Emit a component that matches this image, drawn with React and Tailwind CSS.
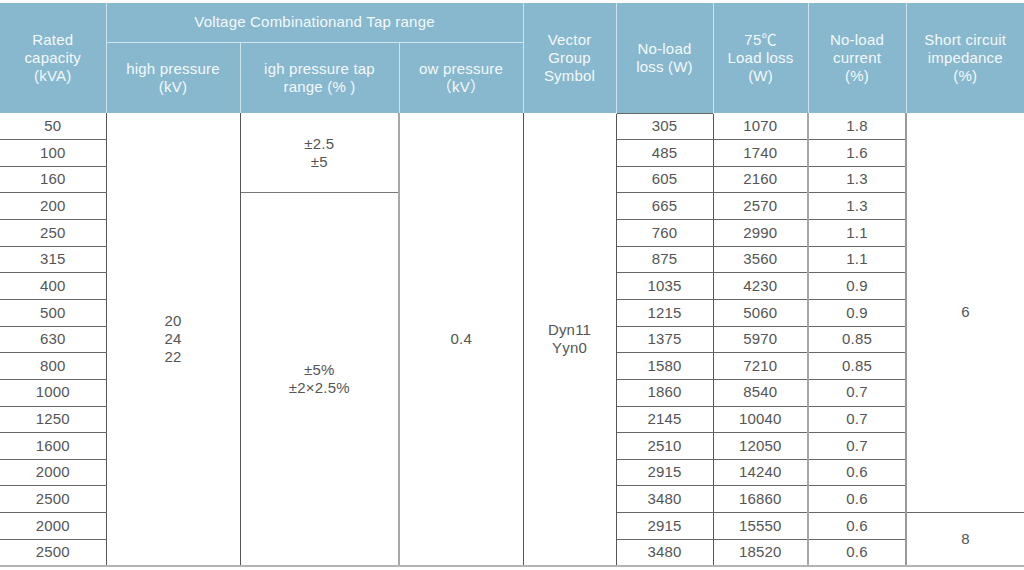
const rows = [
  { cap: '50', nl: '305', ll: '1070', cur: '1.8' },
  { cap: '100', nl: '485', ll: '1740', cur: '1.6' },
  { cap: '160', nl: '605', ll: '2160', cur: '1.3' },
  { cap: '200', nl: '665', ll: '2570', cur: '1.3' },
  { cap: '250', nl: '760', ll: '2990', cur: '1.1' },
  { cap: '315', nl: '875', ll: '3560', cur: '1.1' },
  { cap: '400', nl: '1035', ll: '4230', cur: '0.9' },
  { cap: '500', nl: '1215', ll: '5060', cur: '0.9' },
  { cap: '630', nl: '1375', ll: '5970', cur: '0.85' },
  { cap: '800', nl: '1580', ll: '7210', cur: '0.85' },
  { cap: '1000', nl: '1860', ll: '8540', cur: '0.7' },
  { cap: '1250', nl: '2145', ll: '10040', cur: '0.7' },
  { cap: '1600', nl: '2510', ll: '12050', cur: '0.7' },
  { cap: '2000', nl: '2915', ll: '14240', cur: '0.6' },
  { cap: '2500', nl: '3480', ll: '16860', cur: '0.6' },
  { cap: '2000', nl: '2915', ll: '15550', cur: '0.6' },
  { cap: '2500', nl: '3480', ll: '18520', cur: '0.6' },
];

const th = 'bg-[#87b8ce] text-[#f4f9fb] font-normal text-[15px] leading-[18px] text-center align-middle';
const td = 'h-[26.65px] p-0 text-center align-middle';

export default function App() {
  return (
    <div className="w-[1024px] h-[570px] bg-white pt-[3px] overflow-hidden font-['Liberation_Sans','Noto_Sans_CJK_SC',Arial,sans-serif]">
      <table className="w-[1024px] table-fixed border-collapse text-[15px] text-[#555] tracking-[0.2px]">
        <colgroup>
          <col className="w-[106px]" />
          <col className="w-[134px]" />
          <col className="w-[159px]" />
          <col className="w-[124px]" />
          <col className="w-[93px]" />
          <col className="w-[97px]" />
          <col className="w-[95px]" />
          <col className="w-[98px]" />
          <col className="w-[118px]" />
        </colgroup>
        <thead>
          <tr className="h-[39px]">
            <th rowSpan={2} className={`${th} border-r border-[#cfe3ec]`}>
              Rated<br />capacity<br />(kVA)
            </th>
            <th colSpan={3} className={`${th} border-r border-b border-[#cfe3ec]`}>
              Voltage Combinationand Tap range
            </th>
            <th rowSpan={2} className={`${th} border-r border-[#cfe3ec]`}>
              Vector<br />Group<br />Symbol
            </th>
            <th rowSpan={2} className={`${th} border-r border-[#cfe3ec]`}>
              No-load<br />loss (W)
            </th>
            <th rowSpan={2} className={`${th} border-r border-[#cfe3ec]`}>
              75℃<br />Load loss<br />(W)
            </th>
            <th rowSpan={2} className={`${th} border-r border-[#cfe3ec]`}>
              No-load<br />current<br />(%)
            </th>
            <th rowSpan={2} className={th}>
              Short circuit<br />impedance<br />(%)
            </th>
          </tr>
          <tr className="h-[71px]">
            <th className={`${th} border-r border-[#cfe3ec]`}>high pressure<br />(kV)</th>
            <th className={`${th} border-r border-[#cfe3ec]`}>igh pressure tap<br />range (% )</th>
            <th className={`${th} border-r border-[#cfe3ec]`}>ow pressure<br />（kV）</th>
          </tr>
        </thead>
        <tbody>
          {rows.map((r, i) => (
            <tr key={i}>
              <td className={`${td} border-b ${i === rows.length - 1 ? 'border-b-2 border-[#b4b4b4]' : 'border-[#666]'} border-r border-r-[#555]`}>
                {r.cap}
              </td>
              {i === 0 && (
                <td rowSpan={17} className="p-0 text-center align-middle leading-[18px] border-r border-[#555] border-b-2 border-b-[#b4b4b4]">
                  20<br />24<br />22
                </td>
              )}
              {i === 0 && (
                <td rowSpan={3} className="p-0 text-center align-middle leading-[18px] border-b border-b-[#777] border-r-2 border-r-[#a8a8a8]">
                  ±2.5<br />±5
                </td>
              )}
              {i === 3 && (
                <td rowSpan={14} className="p-0 text-center align-middle leading-[18px] border-r-2 border-r-[#a8a8a8] border-b-2 border-b-[#b4b4b4]">
                  ±5%<br />±2×2.5%
                </td>
              )}
              {i === 0 && (
                <td rowSpan={17} className="p-0 text-center align-middle border-r border-[#555] border-b-2 border-b-[#b4b4b4]">
                  0.4
                </td>
              )}
              {i === 0 && (
                <td rowSpan={17} className="p-0 text-center align-middle leading-[18px] border-r border-[#555] border-b-2 border-b-[#b4b4b4]">
                  Dyn11<br />Yyn0
                </td>
              )}
              <td className={`${td} border-r border-r-[#555] border-b ${i === rows.length - 1 ? 'border-b-2 border-b-[#b4b4b4]' : 'border-b-[#666]'} ${i === 0 ? 'border-t border-t-[#666]' : ''}`}>
                {r.nl}
              </td>
              <td className={`${td} border-r-2 border-r-[#a8a8a8] border-b ${i === rows.length - 1 ? 'border-b-2 border-b-[#b4b4b4]' : 'border-b-[#666]'}`}>
                {r.ll}
              </td>
              <td className={`${td} border-r-2 border-r-[#999] border-b ${i === rows.length - 1 ? 'border-b-2 border-b-[#b4b4b4]' : 'border-b-[#666]'}`}>
                {r.cur}
              </td>
              {i === 0 && (
                <td rowSpan={15} className="p-0 text-center align-middle border-b border-b-[#666]">
                  6
                </td>
              )}
              {i === 15 && (
                <td rowSpan={2} className="p-0 text-center align-middle border-b-2 border-b-[#b4b4b4]">
                  8
                </td>
              )}
            </tr>
          ))}
        </tbody>
      </table>
    </div>
  );
}
